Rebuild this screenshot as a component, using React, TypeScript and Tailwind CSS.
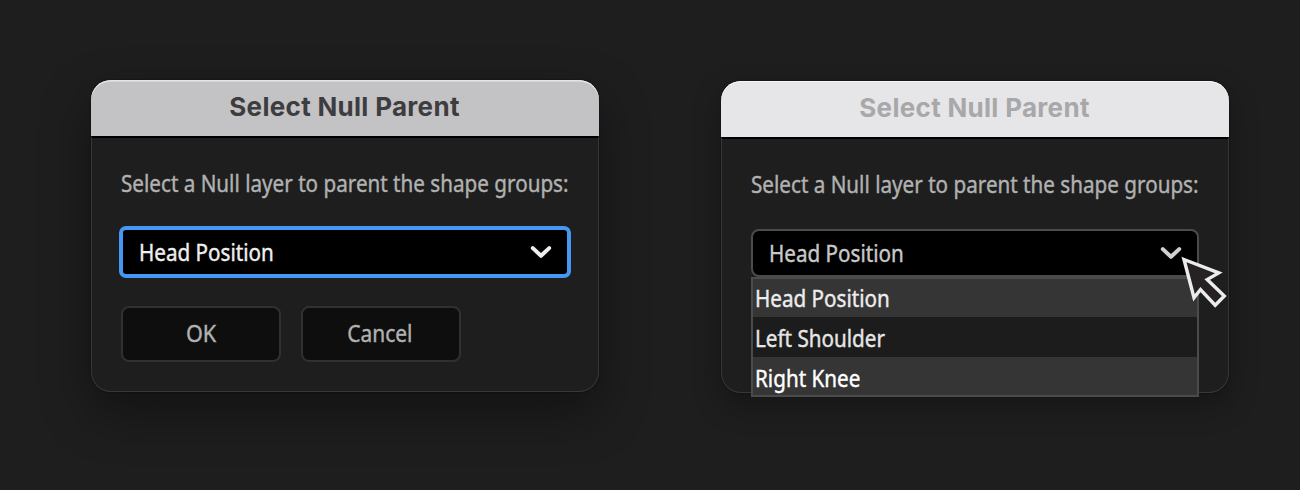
import type { ReactNode } from "react";

const OPTIONS = [
  { label: "Head Position", row: "h-[38px] bg-[#353535] text-[#ededed] pt-[5px]" },
  { label: "Left Shoulder", row: "h-10 bg-[#1c1c1c] text-[#e6e6e6] pt-[7px]" },
  { label: "Right Knee", row: "h-[38px] bg-[#353535] text-white pt-[7px]" },
];

const CONDENSED = "inline-block origin-left scale-x-[0.898] whitespace-nowrap";

function Chevron({ className }: { className: string }) {
  return (
    <svg width="22" height="14" viewBox="0 0 22 14" fill="none" className={className}>
      <path d="M2.8 3.1 11 10.8 19.2 3.1" stroke="currentColor" strokeWidth="4" strokeLinecap="round" strokeLinejoin="round" />
    </svg>
  );
}

function Dialog({ inactive = false, children }: { inactive?: boolean; children: ReactNode }) {
  return (
    <section
      className={
        "relative h-[312px] w-[508px] shrink-0 rounded-[20px] bg-[#1e1e1e] " +
        (inactive
          ? "mt-px shadow-[0_0_2px_rgba(0,0,0,0.6),0_12px_30px_rgba(0,0,0,0.3)]"
          : "shadow-[0_0_2px_rgba(0,0,0,0.6),0_20px_50px_rgba(0,0,0,0.4)]")
      }
    >
      <header
        className={
          "flex h-14 justify-center rounded-t-[20px] pt-[11px] font-['Inter',sans-serif] text-[26px] leading-8 font-bold " +
          (inactive
            ? "bg-[#e6e6e9] text-[#a8a8aa] shadow-[inset_0_1px_0_#f5f5f7]"
            : "bg-[#c3c3c5] text-[#3d3d40] shadow-[inset_0_1.5px_0_#e4e4e6]")
        }
      >
        <h1 className="mr-px tracking-[0.3px] whitespace-nowrap">Select Null Parent</h1>
      </header>
      <div className="h-[256px] rounded-b-[20px] border border-t-2 border-[#373737] border-t-black px-[29px]">
        <p className="h-[60px] pt-[31px] text-[23px] leading-[28px] text-[#b1b1b1]">
          <span className={CONDENSED}>Select a Null layer to parent the shape groups:</span>
        </p>
        {children}
      </div>
    </section>
  );
}

export default function App() {
  return (
    <main className="flex h-[490px] w-[1300px] gap-[122px] overflow-hidden bg-[#1e1e1e] px-[91px] pt-20 font-['Noto_Sans',sans-serif] [&_li]:[-webkit-text-stroke:0.4px] [&_p]:[-webkit-text-stroke:0.4px] [&_button]:[-webkit-text-stroke:0.4px]">
      <Dialog>
        <button className="-ml-0.5 mt-7 flex h-[52px] w-[452px] items-center justify-between rounded-[7px] border-4 border-[#4597f3] bg-black pr-[15px] pl-4 text-[23px] leading-7 text-[#efefef]">
          <span className={CONDENSED}>Head Position</span>
          <Chevron className="text-[#eeeeee]" />
        </button>
        <div className="mt-7 flex gap-5 text-[23px] leading-7 text-[#b1b1b1]">
          <button className="h-14 w-40 rounded-lg border-2 border-[#303030] bg-[#0e0e0e] pb-0.5">
            <span className="inline-block scale-x-[0.94]">OK</span>
          </button>
          <button className="h-14 w-40 rounded-lg border-2 border-[#303030] bg-[#0e0e0e] pr-0.5 pb-0.5">
            <span className="inline-block scale-x-[0.91]">Cancel</span>
          </button>
        </div>
      </Dialog>
      <Dialog inactive>
        <button className="mt-[30px] flex h-12 w-[448px] items-center justify-between rounded-[8px] border-2 border-[#4b4b4b] bg-black pr-[15px] pl-4 text-[23px] leading-7 text-[#c9c9c9]">
          <span className={CONDENSED}>Head Position</span>
          <Chevron className="text-[#d0d0d0]" />
        </button>
        <ul className="absolute top-[196px] left-[30px] h-[120px] w-[448px] border-2 border-[#4b4b4b] text-[23px] leading-[28px]">
          {OPTIONS.map((o) => (
            <li key={o.label} className={"pl-0.5 " + o.row}>
              <span className={CONDENSED}>{o.label}</span>
            </li>
          ))}
        </ul>
        <svg className="absolute top-[173px] left-[459px]" width="50" height="56" viewBox="0 0 50 56" fill="none">
          <path d="M4 5.5 38.8 18.9 27.2 25.6 44.3 42 35.2 51.2 20.5 35.5 14 43.7Z" fill="#262224" stroke="#ececec" strokeWidth="3.4" />
        </svg>
      </Dialog>
    </main>
  );
}
